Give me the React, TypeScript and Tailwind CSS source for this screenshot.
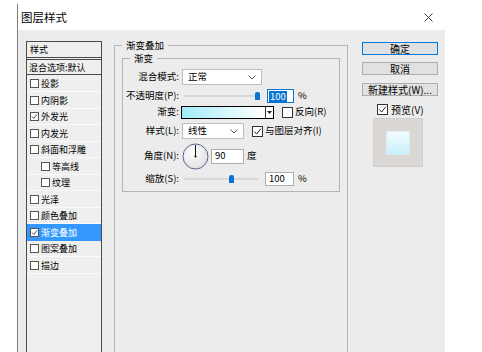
import { clsx } from "clsx";

interface StyleItem {
  label: string;
  h: string;
  checked?: boolean;
  active?: boolean;
  sub?: boolean;
}

const styleItems: StyleItem[] = [
  { label: "投影", h: "h-[17px]" },
  { label: "内阴影", h: "h-[17px]" },
  { label: "外发光", h: "h-[16px]", checked: true },
  { label: "内发光", h: "h-[17px]" },
  { label: "斜面和浮雕", h: "h-[16px]" },
  { label: "等高线", h: "h-[17px]", sub: true },
  { label: "纹理", h: "h-[16px]", sub: true },
  { label: "光泽", h: "h-[17px]" },
  { label: "颜色叠加", h: "h-[16px]" },
  { label: "渐变叠加", h: "h-[17px]", checked: true, active: true },
  { label: "图案叠加", h: "h-[16px]" },
  { label: "描边", h: "h-[17px]" },
];

function CheckBox({ checked, small }: { checked?: boolean; small?: boolean }) {
  const s = small ? 9 : 11;
  return (
    <span
      className={clsx(
        "shrink-0 flex items-center justify-center bg-white border",
        small ? "w-[9px] h-[9px] border-[#555]" : "w-[11px] h-[11px] border-[#333]"
      )}
    >
      {checked && (
        <svg width={s - 2} height={s - 2} viewBox="0 0 10 10">
          <polyline points="1.5,5 4,7.8 8.8,1.8" fill="none" stroke="#222" strokeWidth="1.1" />
        </svg>
      )}
    </span>
  );
}

function Chevron() {
  return (
    <svg width="8" height="5" viewBox="0 0 8 5" className="shrink-0">
      <polyline points="0.5,0.5 4,4 7.5,0.5" fill="none" stroke="#555" strokeWidth="1" />
    </svg>
  );
}

function Select({ value, width }: { value: string; width: string }) {
  return (
    <div
      className={clsx(
        "h-[16px] bg-white border border-[#bdbdbd] flex items-center justify-between pl-[5px] pr-[5px]",
        width
      )}
    >
      <span>{value}</span>
      <Chevron />
    </div>
  );
}

function Slider({ thumb }: { thumb: string }) {
  return (
    <div className="relative w-[80px] h-full flex items-center shrink-0">
      <div className="ml-[2px] w-[74px] h-[2px] bg-[#d8d8d8]" />
      <div className={clsx("absolute top-[3px] w-[5px] h-[8px] rounded-t-[2px] bg-[#0a74d4]", thumb)} />
    </div>
  );
}

function Label({ children }: { children: string }) {
  return <span className="w-[56px] shrink-0 text-right">{children}</span>;
}

export default function App() {
  return (
    <div className="w-[482px] h-[352px] overflow-hidden bg-white pl-[17px] pt-[4px] font-['Noto_Sans_CJK_SC','Noto_Sans',sans-serif] text-black">
      <div className="w-[428px] h-full border-l border-[#7d7d7d] flex flex-col">
        <div className="h-[26px] shrink-0 flex items-center justify-between pl-[3px] pr-[12px] pt-[2px]">
          <span className="text-[11.5px] leading-none">图层样式</span>
          <svg width="9" height="9" viewBox="0 0 9 9" className="-mt-[2px]">
            <path d="M0.5 0.5 L8.5 8.5 M8.5 0.5 L0.5 8.5" stroke="#444" strokeWidth="1" />
          </svg>
        </div>

        <div className="flex-1 min-h-0 overflow-hidden bg-[#ececec] flex items-start pl-[8px] pt-[11px]">
          {/* style list */}
          <div className="w-[76px] h-[330px] shrink-0 border border-[#4a4a4a] bg-[#efefef] flex flex-col text-[9px] leading-none">
            <div className="h-[18px] shrink-0 flex items-center pl-[3px] border-b-[3px] border-double border-[#4a4a4a]">
              样式
            </div>
            <div className="h-[15px] shrink-0 flex items-center pl-[2px] border-b border-[#4a4a4a]">
              混合选项:默认
            </div>
            {styleItems.map((item) => (
              <div
                key={item.label}
                className={clsx(
                  "shrink-0 flex items-center gap-[2px] border-b",
                  item.h,
                  item.sub ? "pl-[14px]" : "pl-[3px]",
                  item.active ? "bg-[#3399ff] text-white border-[#3399ff]" : "border-[#fafafa]"
                )}
              >
                <CheckBox small checked={item.checked} />
                <span>{item.label}</span>
              </div>
            ))}
          </div>

          {/* main settings */}
          <fieldset className="ml-[12px] -mt-[2px] w-[234px] h-[330px] shrink-0 border border-[#b4b4b4] px-[7px] text-[9.5px] leading-none">
            <legend className="px-[4px] leading-[12px]">渐变叠加</legend>
            <fieldset className="mt-[1px] border border-[#b4b4b4] pb-[5px]">
              <legend className="ml-[7px] px-[4px] leading-[12px]">渐变</legend>

              <div className="mt-[5px] h-[16px] flex items-center">
                <Label>混合模式:</Label>
                <div className="ml-[3px]">
                  <Select value="正常" width="w-[80px]" />
                </div>
              </div>

              <div className="mt-[4px] h-[14px] flex items-center">
                <Label>不透明度(P):</Label>
                <div className="ml-[3px] h-full flex items-center">
                  <Slider thumb="left-[73px]" />
                  <div className="ml-[5px] w-[27px] h-[14px] bg-white border border-[#0a74d4] flex items-center pl-[1px]">
                    <span className="bg-[#0a74d4] text-white px-[1px] leading-[11px]">100</span>
                  </div>
                  <span className="ml-[4px]">%</span>
                </div>
              </div>

              <div className="mt-[2px] h-[14px] flex items-center">
                <Label>渐变:</Label>
                <div className="ml-[2px] w-[93px] h-[13px] border border-black flex">
                  <div className="flex-1 bg-linear-to-r from-[#a0ecf8] to-white" />
                  <div className="w-[8px] bg-white border-l border-[#333] flex items-center justify-center">
                    <svg width="5" height="3" viewBox="0 0 5 3">
                      <polygon points="0,0 5,0 2.5,3" fill="#222" />
                    </svg>
                  </div>
                </div>
                <div className="ml-[8px] flex items-center gap-[2px]">
                  <CheckBox />
                  <span>反向(R)</span>
                </div>
              </div>

              <div className="mt-[4px] h-[16px] flex items-center">
                <Label>样式(L):</Label>
                <div className="ml-[3px]">
                  <Select value="线性" width="w-[62px]" />
                </div>
                <div className="ml-[8px] flex items-center gap-[2px]">
                  <CheckBox checked />
                  <span>与图层对齐(I)</span>
                </div>
              </div>

              <div className="mt-[4px] h-[26px] flex items-center">
                <Label>角度(N):</Label>
                <svg width="27" height="27" viewBox="0 0 27 27" className="ml-[3px] shrink-0">
                  <defs>
                    <radialGradient id="dial" cx="40%" cy="35%" r="70%">
                      <stop offset="0" stopColor="#ffffff" />
                      <stop offset="1" stopColor="#dedede" />
                    </radialGradient>
                  </defs>
                  <circle cx="13.5" cy="13.5" r="12.5" fill="url(#dial)" stroke="#56678a" />
                  <line x1="13.5" y1="13.5" x2="13.5" y2="2" stroke="#111" />
                  <circle cx="13.5" cy="13.5" r="1.1" fill="#111" />
                </svg>
                <div className="ml-[2px] w-[33px] h-[15px] bg-white border border-[#adadad] flex items-center pl-[3px]">
                  90
                </div>
                <span className="ml-[3px]">度</span>
              </div>

              <div className="mt-[3px] h-[14px] flex items-center">
                <Label>缩放(S):</Label>
                <div className="ml-[3px] h-full flex items-center">
                  <Slider thumb="left-[47px]" />
                  <div className="ml-[3px] w-[29px] h-[14px] bg-white border border-[#adadad] flex items-center pl-[3px]">
                    100
                  </div>
                  <span className="ml-[4px]">%</span>
                </div>
              </div>
            </fieldset>
          </fieldset>

          {/* buttons */}
          <div className="ml-[14px] w-[76px] shrink-0 flex flex-col text-[10px] leading-none">
            <button className="mt-[1px] h-[13px] bg-[#e1e1e1] border border-[#0078d7] flex items-center justify-center">
              确定
            </button>
            <button className="mt-[7px] h-[13px] bg-[#e1e1e1] border border-[#adadad] flex items-center justify-center">
              取消
            </button>
            <button className="mt-[8px] h-[13px] bg-[#e1e1e1] border border-[#adadad] flex items-center justify-center whitespace-nowrap">
              新建样式(W)...
            </button>
            <div className="mt-[8px] pl-[15px] flex items-center gap-[3px]">
              <CheckBox checked />
              <span>预览(V)</span>
            </div>
            <div className="mt-[3px] ml-[11px] w-[50px] h-[49px] bg-[#dad7d4] border border-[#cfcfcf] flex items-center justify-center">
              <div className="w-[24px] h-[24px] border border-[#d9ecf2] bg-linear-to-b from-[#f3fcff] to-[#c7f0fb]" />
            </div>
          </div>
        </div>
      </div>
    </div>
  );
}
